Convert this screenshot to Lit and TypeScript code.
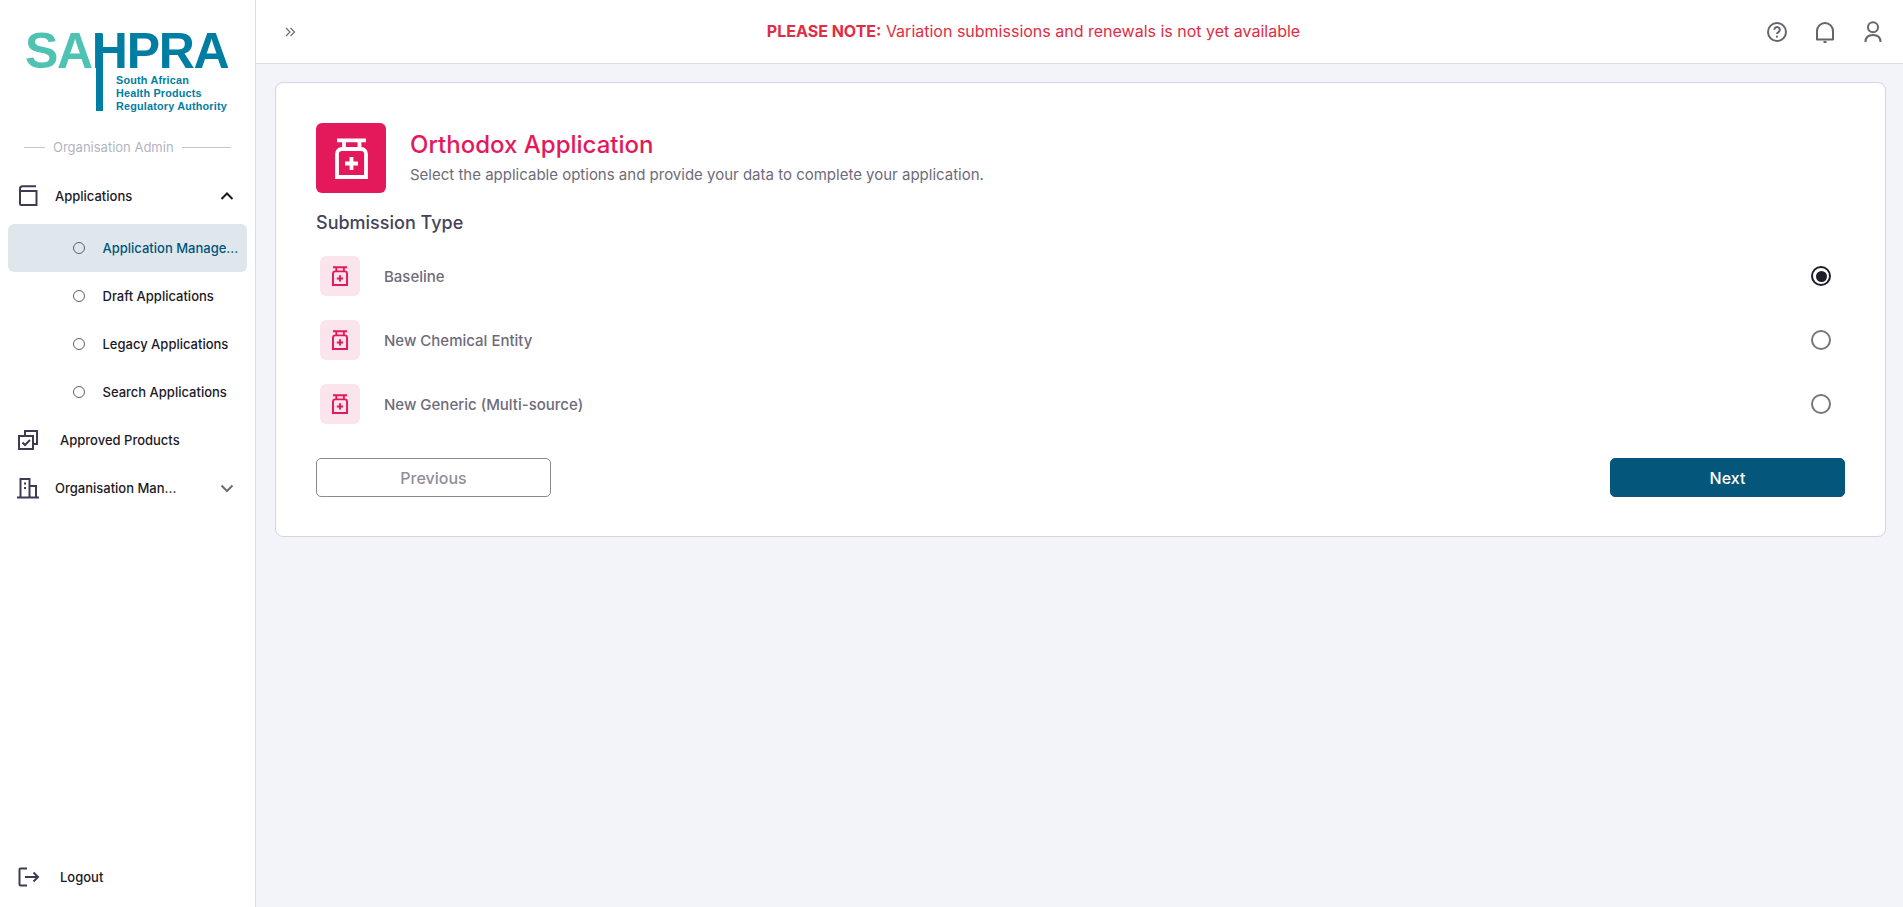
import { LitElement, html, css, svg } from "lit";
import { customElement } from "lit/decorators.js";

const bottle = (cls: string) => html`<svg class=${cls} viewBox="0 0 33 41" fill="none" stroke="currentColor">
  <path d="M2 2.300h29M9 2.300v9M24.500 2.300v9"/>
  <path d="M7 11h19c3 0 5 2 5 5v23H2V16c0-3 2-5 5-5Z"/>
  <path d="M16.500 19v13M10 25.500h13"/>
</svg>`;

const chevUp = svg`<path d="M4.500 13 10 7.500l5.500 5.500" fill="none" stroke="currentColor" stroke-width="2"/>`;
const chevDown = svg`<path d="M4.500 7.500 10 13l5.500-5.500" fill="none" stroke="currentColor" stroke-width="2"/>`;

@customElement("app-root")
export class AppRoot extends LitElement {
  static styles = css`
    :host { display: block; font-family: Inter, "Liberation Sans", sans-serif; }
    * { box-sizing: border-box; }
    .page { display: flex; width: 100%; height: 907px; background: #f3f4fa; overflow: hidden; }
    .side { width: 256px; flex: none; background: #fff; border-right: 1px solid #dcdde3; display: flex; flex-direction: column; padding: 0 8px; }
    .logo { position: relative; height: 132px; margin: 0 -8px; flex: none; font-family: "Liberation Sans", sans-serif; font-weight: 700; }
    .logo .big { position: absolute; left: 25px; top: 30px; font-size: 50px; line-height: 42px; letter-spacing: -1.300px; color: #007da3; white-space: nowrap; }
    .logo .sa { color: #4fc3b3; }
    .logo .bar { position: absolute; left: 96px; top: 34px; width: 7px; height: 77px; background: #007da3; }
    .logo .sub { position: absolute; left: 116px; top: 74px; font-size: 10.800px; line-height: 13px; color: #007da3; white-space: nowrap; letter-spacing: 0.2px; }
    .role { display: flex; align-items: center; gap: 8px; height: 30px; margin: 0 16px; color: #b5b5c0; font-size: 13px; flex: none; white-space: nowrap; }
    .role::before { content: ""; width: 21px; flex: none; border-top: 1px solid #c4c4cc; }
    .role::after { content: ""; flex: 1; border-top: 1px solid #c4c4cc; }
    .nav { display: flex; flex-direction: column; margin-top: 10px; flex: 1; }
    .item { height: 48px; display: flex; align-items: center; font-size: 13px; font-weight: 500; color: #1c1a26; padding-left: 8px; flex: none; }
    .item.first { margin-bottom: 4px; }
    .item .ic { width: 24px; height: 24px; color: #3f3b52; flex: none; }
    .item .lb { margin-left: 15px; flex: 1; }
    .item.plain .lb { margin-left: 20px; }
    .item .chev { width: 20px; height: 20px; margin-right: 10px; flex: none; color: #1c1a26; }
    .item .chev.grey { color: #6e6b7b; }
    .sub-item { padding-left: 65px; border-radius: 6px; }
    .sub-item.on { background: #dfe7ec; color: #00567a; }
    .dot { width: 12px; height: 12px; border: 1px solid #5f5c6e; border-radius: 50%; flex: none; margin-right: 17.500px; }
    .spacer { flex: 1; }
    .logout { margin-bottom: 6px; }
    .main { flex: 1; min-width: 0; display: flex; flex-direction: column; }
    .top { height: 64px; background: #fff; border-bottom: 1px solid #dcdde3; display: flex; align-items: center; padding: 0 18px 0 28px; flex: none; }
    .collapse { width: 12px; height: 12px; color: #6e6b7b; flex: none; }
    .note { flex: 1; text-align: center; color: #e02d45; font-size: 16px; margin-left: 6px; padding-bottom: 1px; }
    .note b { font-weight: 700; }
    .tools { display: flex; gap: 24px; }
    .tools svg { width: 24px; height: 24px; color: #66646f; display: block; }
    .content { padding: 18px 17px 0 19px; }
    .card { background: #fff; border: 1px solid #d5d6de; border-radius: 8px; padding: 40px; height: 455px; }
    .head { display: flex; align-items: center; gap: 24px; }
    .badge { width: 70px; height: 70px; background: #e3195c; border-radius: 6px; color: #fff; display: flex; align-items: center; justify-content: center; flex: none; }
    .badge svg { width: 33px; height: 41px; stroke-width: 3.800; }
    .htext { margin-bottom: 2px; }
    .title { font-size: 24px; line-height: 32px; color: #e3195c; font-weight: 500; margin: 0; }
    .desc { font-size: 15px; line-height: 20px; color: #6e6b7b; margin: 4px 0 0; }
    .section { font-size: 18px; line-height: 24px; font-weight: 500; color: #45435a; margin: 18px 0 0; }
    .opts { margin-top: 21px; display: flex; flex-direction: column; gap: 24px; }
    .opt { display: flex; align-items: center; height: 40px; padding: 0 14px 0 4px; }
    .opt .ib { width: 40px; height: 40px; border-radius: 6px; background: #fce4ec; color: #e3195c; display: flex; align-items: center; justify-content: center; flex: none; }
    .ib svg { width: 16px; height: 20px; stroke-width: 4; }
    .opt .name { margin-left: 24px; flex: 1; font-size: 15px; font-weight: 500; color: #6e6b7b; }
    .radio { width: 20px; height: 20px; border-radius: 50%; border: 2px solid #77757f; flex: none; }
    .radio.on { border-color: #1f1f29; position: relative; }
    .radio.on::after { content: ""; position: absolute; inset: 2.500px; border-radius: 50%; background: #1f1f29; }
    .actions { display: flex; justify-content: space-between; margin-top: 34px; }
    .btn { width: 235px; height: 39px; border-radius: 5px; font: 500 16px Inter, "Liberation Sans", sans-serif; display: flex; align-items: center; justify-content: center; }
    .prev { background: #fff; border: 1px solid #8a8893; color: #908e99; }
    .next { background: #04567a; border: 1px solid #04567a; color: #fff; }
  `;

  render() {
    return html`<div class="page">
      <aside class="side">
        <div class="logo">
          <div class="big"><span class="sa">SA</span><span>HPRA</span></div>
          <div class="bar"></div>
          <div class="sub">South African<br />Health Products<br />Regulatory Authority</div>
        </div>
        <div class="role">Organisation Admin</div>
        <nav class="nav">
          <div class="item first">
            <svg class="ic" viewBox="0 0 24 24" fill="none" stroke="currentColor" stroke-width="2"><path d="M20 2.300H6.500A2.500 2.500 0 0 0 4 4.800V19.500A1.500 1.500 0 0 0 5.500 21H20.500V7H5"/></svg>
            <span class="lb">Applications</span>
            <svg class="chev" viewBox="0 0 20 20">${chevUp}</svg>
          </div>
          <div class="item sub-item on"><span class="dot"></span><span>Application Manage...</span></div>
          <div class="item sub-item"><span class="dot"></span><span>Draft Applications</span></div>
          <div class="item sub-item"><span class="dot"></span><span>Legacy Applications</span></div>
          <div class="item sub-item"><span class="dot"></span><span>Search Applications</span></div>
          <div class="item plain">
            <svg class="ic" viewBox="0 0 24 24" fill="none" stroke="currentColor" stroke-width="2"><path d="M9 7V3h12v13h-4"/><path d="M3 8h14v13H3z"/><path d="M6.500 14.500l2.500 2.500 5-5"/></svg>
            <span class="lb">Approved Products</span>
          </div>
          <div class="item">
            <svg class="ic" viewBox="0 0 24 24" fill="none" stroke="currentColor" stroke-width="2"><path d="M1 21.500h22M4.500 21.500V3h9v18.500M13.500 10H20v11.500M8 7.500h2M8 12h2"/></svg>
            <span class="lb">Organisation Man...</span>
            <svg class="chev grey" viewBox="0 0 20 20">${chevDown}</svg>
          </div>
          <div class="spacer"></div>
          <div class="item plain logout">
            <svg class="ic" viewBox="0 0 24 24" fill="none" stroke="currentColor" stroke-width="2"><path d="M11 3.500H4.500a1 1 0 0 0-1 1v15a1 1 0 0 0 1 1H11"/><path d="M9 12h13M17.500 7.500 22 12l-4.500 4.500"/></svg>
            <span class="lb">Logout</span>
          </div>
        </nav>
      </aside>
      <div class="main">
        <header class="top">
          <svg class="collapse" viewBox="0 0 12 12" fill="none" stroke="currentColor" stroke-width="1.200"><path d="M2 2l4 4-4 4M6.500 2l4 4-4 4"/></svg>
          <div class="note"><b>PLEASE NOTE:</b> Variation submissions and renewals is not yet available</div>
          <div class="tools">
            <svg viewBox="0 0 24 24" fill="none" stroke="currentColor" stroke-width="2"><circle cx="12" cy="12" r="9"/><path d="M9.400 9.800a2.700 2.700 0 1 1 4.100 2.300c-1 .6-1.500 1.100-1.500 2"/><path d="M12 15.700v1.800"/></svg>
            <svg viewBox="0 0 24 24" fill="none" stroke="currentColor" stroke-width="2"><path d="M4 19.500V11a8 8 0 0 1 16 0v8.500Z" stroke-linejoin="round"/><path d="M10.500 22h3"/></svg>
            <svg viewBox="0 0 24 24" fill="none" stroke="currentColor" stroke-width="2"><circle cx="12" cy="7.200" r="5"/><path d="M4.500 22c0-4.500 3-7 7.500-7s7.500 2.500 7.500 7"/></svg>
          </div>
        </header>
        <div class="content">
          <section class="card">
            <div class="head">
              <div class="badge">${bottle("b")}</div>
              <div class="htext">
                <h1 class="title">Orthodox Application</h1>
                <p class="desc">Select the applicable options and provide your data to complete your application.</p>
              </div>
            </div>
            <h2 class="section">Submission Type</h2>
            <div class="opts">
              <div class="opt"><div class="ib">${bottle("s")}</div><span class="name">Baseline</span><span class="radio on"></span></div>
              <div class="opt"><div class="ib">${bottle("s")}</div><span class="name">New Chemical Entity</span><span class="radio"></span></div>
              <div class="opt"><div class="ib">${bottle("s")}</div><span class="name">New Generic (Multi-source)</span><span class="radio"></span></div>
            </div>
            <div class="actions">
              <button class="btn prev">Previous</button>
              <button class="btn next">Next</button>
            </div>
          </section>
        </div>
      </div>
    </div>`;
  }
}
